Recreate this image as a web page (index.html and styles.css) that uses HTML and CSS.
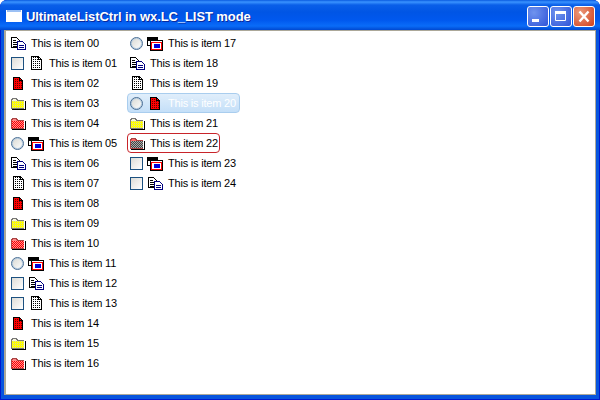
FILE: index.html
```html
<!DOCTYPE html>
<html lang="en">
<head>
    <meta charset="UTF-8">
    <title>UltimateListCtrl in wx.LC_LIST mode</title>
    <link rel="stylesheet" href="styles.css">
</head>
<body>
    <svg class="defs" width="0" height="0">
        <defs>
            <pattern id="ditherWhite" width="2" height="2" patternUnits="userSpaceOnUse">
                <rect width="2" height="2" fill="#fff"/>
                <rect width="1" height="1" fill="#000"/>
            </pattern>
            <pattern id="ditherRed" width="2" height="2" patternUnits="userSpaceOnUse">
                <rect width="2" height="2" fill="#f00"/>
                <rect width="1" height="1" fill="#600"/>
            </pattern>
            <pattern id="ditherYellow" width="2" height="2" patternUnits="userSpaceOnUse">
                <rect width="2" height="2" fill="#ff0"/>
                <rect width="1" height="1" fill="#d8d8a0"/>
            </pattern>
            <pattern id="ditherPink" width="2" height="2" patternUnits="userSpaceOnUse">
                <rect width="2" height="2" fill="#f00"/>
                <rect width="1" height="1" fill="#ff9090"/>
                <rect x="1" y="1" width="1" height="1" fill="#ff9090"/>
            </pattern>
            <pattern id="ditherGrey" width="2" height="2" patternUnits="userSpaceOnUse">
                <rect width="2" height="2" fill="#aaa"/>
                <rect width="1" height="1" fill="#444"/>
                <rect x="1" y="1" width="1" height="1" fill="#444"/>
            </pattern>
            <symbol id="icon-copy" viewBox="0 0 16 16">
                <path d="M.5 2.500h5l3 3v7h-8z" fill="#fff" stroke="#000"/>
                <path d="M2 5h3M2 7h4M2 9h4M2 11h4" stroke="#000"/>
                <path d="M6.500 6.500h5l3 3v5h-8z" fill="#fff" stroke="#000080"/>
                <path d="M8 10h5M8 12h5" stroke="#000080"/>
                <path d="M6 15h9v-6h-1v5h-8z" fill="#000080"/>
            </symbol>
            <symbol id="icon-doc" viewBox="0 0 16 16">
                <path d="M2.500 1.500h7l3 3v10h-10z" fill="url(#ditherWhite)" stroke="#000"/>
                <path d="M9.500 1.500v3h3z" fill="#fff" stroke="#000"/>
            </symbol>
            <symbol id="icon-reddoc" viewBox="0 0 16 16">
                <path d="M2.500 2.500h6l3 3v9h-9z" fill="url(#ditherRed)" stroke="#000"/>
                <path d="M8.500 2.500v3h3z" fill="#f00" stroke="#000"/>
            </symbol>
            <symbol id="icon-folder" viewBox="0 0 16 16">
                <path d="M.5 5.500l1-2h4l1 2h6v8h-12z" fill="#f4f4dc" stroke="#777"/>
                <rect x="1" y="6" width="12" height="7" fill="url(#ditherYellow)"/>
                <path d="M1 14.500h13M14.500 6v9" stroke="#000"/>
            </symbol>
            <symbol id="icon-redfolder" viewBox="0 0 16 16">
                <path d="M.5 5.500l1-2h4l1 2h6v8h-12z" fill="#f88" stroke="#a44"/>
                <rect x="1" y="6" width="12" height="7" fill="url(#ditherPink)"/>
                <path d="M1 14.500h13M14.500 6v9" stroke="#000"/>
            </symbol>
            <symbol id="icon-dimfolder" viewBox="0 0 16 16">
                <path d="M.5 5.500l1-2h4l1 2h6v8h-12z" fill="#f66" stroke="#a44"/>
                <rect x="1" y="6" width="12" height="7" fill="url(#ditherGrey)"/>
                <path d="M1 14.500h13M14.500 6v9" stroke="#000"/>
            </symbol>
            <symbol id="icon-window" viewBox="0 0 16 16">
                <rect x=".5" y="2.500" width="10" height="8" fill="#fff" stroke="#000"/>
                <rect x="1" y="3" width="9" height="3" fill="#000"/>
                <rect x="3.500" y="5.500" width="12" height="10" fill="#fff" stroke="#000"/>
                <rect x="4" y="7" width="11" height="8" fill="#f00"/>
                <rect x="5" y="8" width="9" height="6" fill="#fff"/>
                <rect x="7" y="9" width="6" height="4" fill="#00d"/>
            </symbol>
        </defs>
    </svg>

    <div class="window">
        <div class="titlebar">
            <svg class="app-icon" width="16" height="12" viewBox="0 0 16 12">
                <rect width="16" height="12" fill="#fff"/>
                <rect x="1" y="0" width="14" height="2" fill="#9cc0f4"/>
            </svg>
            <span class="title">UltimateListCtrl in wx.LC_LIST mode</span>
            <div class="caption-buttons">
                <div class="cap-btn">
                    <svg width="22" height="21" viewBox="0 0 22 21"><rect x="5" y="13" width="7" height="3" fill="#fff"/></svg>
                </div>
                <div class="cap-btn">
                    <svg width="22" height="21" viewBox="0 0 22 21"><path d="M5.500 5.500h10v9h-10z" fill="none" stroke="#fff"/><rect x="5" y="5" width="11" height="3" fill="#fff"/></svg>
                </div>
                <div class="cap-btn close">
                    <svg width="22" height="21" viewBox="0 0 22 21"><path d="M6.500 5.500l9 10M15.500 5.500l-9 10" stroke="#fff" stroke-width="2.400"/></svg>
                </div>
            </div>
        </div>

        <div class="client">
            <div class="list">
                <div class="column col-first">
                    <div class="item"><svg class="ico"><use href="#icon-copy"/></svg><span class="label">This is item 00</span></div>
                    <div class="item"><span class="check"></span><svg class="ico"><use href="#icon-doc"/></svg><span class="label">This is item 01</span></div>
                    <div class="item"><svg class="ico"><use href="#icon-reddoc"/></svg><span class="label">This is item 02</span></div>
                    <div class="item"><svg class="ico"><use href="#icon-folder"/></svg><span class="label">This is item 03</span></div>
                    <div class="item"><svg class="ico"><use href="#icon-redfolder"/></svg><span class="label">This is item 04</span></div>
                    <div class="item"><span class="radio"></span><svg class="ico win"><use href="#icon-window"/></svg><span class="label">This is item 05</span></div>
                    <div class="item"><svg class="ico"><use href="#icon-copy"/></svg><span class="label">This is item 06</span></div>
                    <div class="item"><svg class="ico"><use href="#icon-doc"/></svg><span class="label">This is item 07</span></div>
                    <div class="item"><svg class="ico"><use href="#icon-reddoc"/></svg><span class="label">This is item 08</span></div>
                    <div class="item"><svg class="ico"><use href="#icon-folder"/></svg><span class="label">This is item 09</span></div>
                    <div class="item"><svg class="ico"><use href="#icon-redfolder"/></svg><span class="label">This is item 10</span></div>
                    <div class="item"><span class="radio"></span><svg class="ico win"><use href="#icon-window"/></svg><span class="label">This is item 11</span></div>
                    <div class="item"><span class="check"></span><svg class="ico"><use href="#icon-copy"/></svg><span class="label">This is item 12</span></div>
                    <div class="item"><span class="check"></span><svg class="ico"><use href="#icon-doc"/></svg><span class="label">This is item 13</span></div>
                    <div class="item"><svg class="ico"><use href="#icon-reddoc"/></svg><span class="label">This is item 14</span></div>
                    <div class="item"><svg class="ico"><use href="#icon-folder"/></svg><span class="label">This is item 15</span></div>
                    <div class="item"><svg class="ico"><use href="#icon-redfolder"/></svg><span class="label">This is item 16</span></div>
                </div>
                <div class="column">
                    <div class="item"><span class="radio"></span><svg class="ico win"><use href="#icon-window"/></svg><span class="label">This is item 17</span></div>
                    <div class="item"><svg class="ico"><use href="#icon-copy"/></svg><span class="label">This is item 18</span></div>
                    <div class="item"><svg class="ico"><use href="#icon-doc"/></svg><span class="label">This is item 19</span></div>
                    <div class="item selected"><span class="radio"></span><svg class="ico"><use href="#icon-reddoc"/></svg><span class="label">This is item 20</span></div>
                    <div class="item"><svg class="ico"><use href="#icon-folder"/></svg><span class="label">This is item 21</span></div>
                    <div class="item focused"><svg class="ico"><use href="#icon-dimfolder"/></svg><span class="label">This is item 22</span></div>
                    <div class="item"><span class="check"></span><svg class="ico win"><use href="#icon-window"/></svg><span class="label">This is item 23</span></div>
                    <div class="item"><span class="check"></span><svg class="ico"><use href="#icon-copy"/></svg><span class="label">This is item 24</span></div>
                </div>
            </div>
        </div>
    </div>
</body>
</html>
```

FILE: styles.css
```css
html, body {
    margin: 0;
    padding: 0;
    background: #fff;
}
.defs {
    display: block;
    height: 0;
}
.window {
    width: 600px;
    height: 400px;
    box-sizing: border-box;
    display: flex;
    flex-direction: column;
    background: #0855dd;
    box-shadow: inset 0 0 0 1px #0019cf;
    border-radius: 7px 7px 0 0;
    overflow: hidden;
}
.titlebar {
    height: 30px;
    flex: none;
    box-sizing: border-box;
    display: flex;
    align-items: center;
    padding: 2px 5px 0 6px;
    background: linear-gradient(#0a5be0 0, #3a93ff 2px, #0a5fe8 5px, #0055e5 12px, #0058ee 20px, #0a6cf8 26px, #0048d0 30px);
}
.app-icon {
    margin-right: 4px;
}
.title {
    flex: 1;
    color: #fff;
    font: bold 13px "Liberation Sans", Arial, sans-serif;
    letter-spacing: -0.08px;
    text-shadow: 1px 1px 0 #0a2a9c;
}
.caption-buttons {
    display: flex;
    gap: 1px;
}
.cap-btn {
    width: 22px;
    height: 21px;
    box-sizing: border-box;
    border: 1px solid #fff;
    border-radius: 3px;
    background: radial-gradient(circle at 30% 30%, #6f93ee, #2f54d8);
}
.cap-btn svg {
    display: block;
    margin: -1px;
}
.cap-btn.close {
    background: radial-gradient(circle at 30% 30%, #ec9a7c, #cf3f1c);
}
.client {
    flex: 1;
    margin: 0 4px 5px 4px;
    border: 1px solid #aca899;
    border-left-width: 2px;
    background: #fff;
}
.list {
    display: flex;
    padding: 2px 0 0 2px;
}
.column {
    display: flex;
    flex-direction: column;
    align-items: flex-start;
}
.col-first {
    width: 119px;
}
.item {
    height: 20px;
    box-sizing: border-box;
    display: flex;
    align-items: center;
    padding: 0 3px 0 2px;
    border: 1px solid transparent;
    border-radius: 4px;
    font: 11px "Liberation Sans", Arial, sans-serif;
    letter-spacing: -0.2px;
    color: #000;
    white-space: nowrap;
}
.ico {
    width: 16px;
    height: 16px;
    flex: none;
    shape-rendering: crispEdges;
}
.win {
    margin: 0 1px 0 -1px;
}
.label {
    margin-left: 4px;
}
.check {
    width: 13px;
    height: 13px;
    box-sizing: border-box;
    flex: none;
    margin-right: 5px;
    border: 1px solid #1c5180;
    background: linear-gradient(135deg, #dcdcd7, #fff);
}
.radio {
    width: 13px;
    height: 13px;
    box-sizing: border-box;
    flex: none;
    margin-right: 5px;
    border: 1px solid #4a6f96;
    border-radius: 50%;
    box-shadow: inset 0 0 0 1px #b8cde0;
    background: linear-gradient(135deg, #d8d8d2, #fff);
}
.selected {
    border-color: #a9cdee;
    background: linear-gradient(#e0eefb, #c4dff8);
}
.selected .label {
    color: #fff;
}
.focused {
    padding-right: 1px;
    border-color: #c8242a;
}
```
